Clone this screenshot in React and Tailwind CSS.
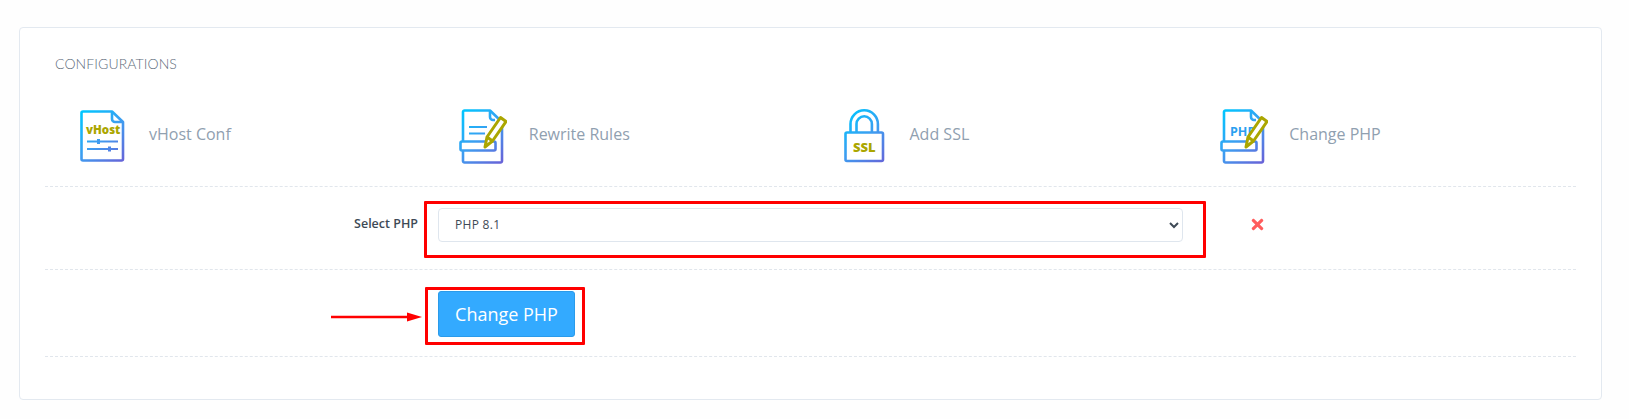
import React from 'react';
import { FaTimes } from 'react-icons/fa';

const OLIVE = '#aba600';

const Gradient = ({ id }) => (
  <defs>
    <linearGradient id={id} gradientUnits="userSpaceOnUse" x1="2" y1="4" x2="46" y2="54">
      <stop offset="0" stopColor="#00c6ff" />
      <stop offset="0.5" stopColor="#3f9cf0" />
      <stop offset="1" stopColor="#6a5fd6" />
    </linearGradient>
  </defs>
);

const Pencil = () => (
  <path
    d="M26 39 L28 29 L41.5 9.5 L47 13.5 L33.5 33 Z M28 29 L33.5 33"
    fill="#fff"
    stroke={OLIVE}
    strokeWidth="3"
    strokeLinejoin="round"
  />
);

const VhostIcon = () => (
  <svg width="48" height="56" viewBox="0 0 48 56" fill="none">
    <Gradient id="g-vhost" />
    <g stroke="url(#g-vhost)" strokeWidth="2.6" strokeLinejoin="round">
      <path d="M3 3.5 H32 L43 14 V51 a1.5 1.5 0 0 1 -1.5 1.5 H3 a1.5 1.5 0 0 1 -1.5 -1.5 V5 a1.5 1.5 0 0 1 1.5 -1.5 Z" />
      <path d="M32 3.5 V11 a3 3 0 0 0 3 3 H43" />
      <path d="M7 33.5 H38 M7 41 H38" strokeWidth="2" />
      <path d="M18.5 31 V36 M29.5 38.500 V43.500" strokeWidth="3" />
    </g>
    <text x="6" y="26" fontFamily="Open Sans" fontWeight="800" fontSize="11.5" fill={OLIVE}>vHost</text>
  </svg>
);

const RewriteIcon = () => (
  <svg width="48" height="56" viewBox="0 0 48 56" fill="none">
    <Gradient id="g-rewrite" />
    <g stroke="url(#g-rewrite)" strokeWidth="2.6" strokeLinejoin="round">
      <path d="M4 33 V4 a1.500 1.500 0 0 1 1.500 -1.500 H31 L43 14 V53 a1.500 1.500 0 0 1 -1.500 1.500 H5.500 a1.500 1.500 0 0 1 -1.500 -1.500 V43" />
      <path d="M31 2.500 V9 a3 3 0 0 0 3 3 H36" />
      <rect x="1.500" y="33.500" width="35" height="9" rx="1.500" fill="#fff" />
      <path d="M10 19 H28 M10 25.500 H26" strokeWidth="2" />
    </g>
    <Pencil />
  </svg>
);

const SslIcon = () => (
  <svg width="48" height="56" viewBox="0 0 48 56" fill="none">
    <Gradient id="g-ssl" />
    <g stroke="url(#g-ssl)" strokeWidth="2.6" strokeLinejoin="round">
      <rect x="1.500" y="24.500" width="37.500" height="28.500" rx="1.500" />
      <path d="M6.500 24 V16 a13.700 13.700 0 0 1 27.400 0 V24" />
      <path d="M12.500 24 V16 a7.700 7.700 0 0 1 15.400 0 V24" />
    </g>
    <text x="20.200" y="44" textAnchor="middle" fontFamily="Open Sans" fontWeight="800" fontSize="13" fill={OLIVE}>SSL</text>
  </svg>
);

const PhpIcon = () => (
  <svg width="48" height="56" viewBox="0 0 48 56" fill="none">
    <Gradient id="g-php" />
    <g stroke="url(#g-php)" strokeWidth="2.6" strokeLinejoin="round">
      <path d="M4 33 V4 a1.500 1.500 0 0 1 1.500 -1.500 H31 L43 14 V53 a1.500 1.500 0 0 1 -1.500 1.500 H5.500 a1.500 1.500 0 0 1 -1.500 -1.500 V43" />
      <path d="M31 2.500 V9 a3 3 0 0 0 3 3 H36" />
      <rect x="1.500" y="33.500" width="35" height="9" rx="1.500" fill="#fff" />
    </g>
    <text x="10" y="27.500" fontFamily="Open Sans" fontWeight="700" fontSize="12.500" fill="#2b9ff0">PHP</text>
    <Pencil />
  </svg>
);

// each column has its own offset, the icons are not evenly placed in the original
const TopItem = ({ icon, label, className, labelClass }) => (
  <div className={`flex items-center w-[383px] h-[56px] ${className}`}>
    <div className="w-[48px] h-[56px] pt-[2px]">{icon}</div>
    <span className={`text-[16px] leading-[24px] text-[#90a0b0] ${labelClass}`}>{label}</span>
  </div>
);

export default function App() {
  return (
    <div className="w-[1629px] h-[419px] bg-[#fefefe] pt-[27px] pl-[19px] font-['Open_Sans',sans-serif]">
      <div className="w-[1583px] h-[373px] bg-white border border-[#e3e9f0] rounded-[4px] pt-[26px] pl-[25px] pr-[25px]">
        <h2 className="pl-[10px] text-[14px] leading-[20px] font-light text-[#5d6b7a] tracking-[0.1px] font-['Lato',sans-serif]">
          CONFIGURATIONS
        </h2>

        <div className="flex h-[113px] border-b border-dashed border-[#e1e6ec] pt-[32px]">
          <TopItem icon={<VhostIcon />} label="vHost Conf" className="pl-[35px]" labelClass="ml-[21px]" />
          <TopItem icon={<RewriteIcon />} label="Rewrite Rules" className="pl-[31px]" labelClass="ml-[22px]" />
          <TopItem icon={<SslIcon />} label="Add SSL" className="pl-[33px]" labelClass="ml-[18px]" />
          <TopItem icon={<PhpIcon />} label="Change PHP" className="pl-[27px]" labelClass="ml-[21px]" />
        </div>

        {/* select row */}
        <div className="flex items-center h-[83px] pb-[7px] border-b border-dashed border-[#e1e6ec]">
          <label className="w-[373px] text-right text-[12.5px] font-semibold text-[#3e4a56]">Select PHP</label>
          <div className="relative ml-[20px] w-[745px] h-[34px]">
            <select className="w-full h-full bg-white border border-[#dfe6ee] rounded-[4px] pl-[12px] pr-[6px] text-[12px] text-[#3e4a56] tracking-[0.3px] outline-none">
              <option>PHP 8.1</option>
            </select>
            <div className="absolute left-[-14px] top-[-7px] w-[782px] h-[57px] border-[3px] border-[#ff0000] rounded-[1px] pointer-events-none" />
          </div>
          <FaTimes className="ml-[66px] text-[#ff5c5c] text-[17px]" />
        </div>

        {/* button row */}
        <div className="flex items-center h-[87px] pt-[2px] border-b border-dashed border-[#e1e6ec]">
          <div className="relative ml-[393px] h-[46px]">
            <button className="w-[137px] h-[46px] bg-[#33aaff] border border-[#2a9bea] rounded-[3px] text-white text-[18px]">
              Change PHP
            </button>
            <div className="absolute left-[-13px] top-[-4px] w-[160px] h-[58px] border-[3px] border-[#ff0000] rounded-[1px] pointer-events-none" />
            <svg className="absolute left-[-107px] top-[20px]" width="92" height="12" viewBox="0 0 92 12">
              <path d="M0 6 H78" stroke="#ff0000" strokeWidth="2.500" strokeLinecap="round" />
              <path d="M76 1.500 L91 6 L76 10.500 Z" fill="#ff0000" />
            </svg>
          </div>
        </div>
      </div>
    </div>
  );
}
